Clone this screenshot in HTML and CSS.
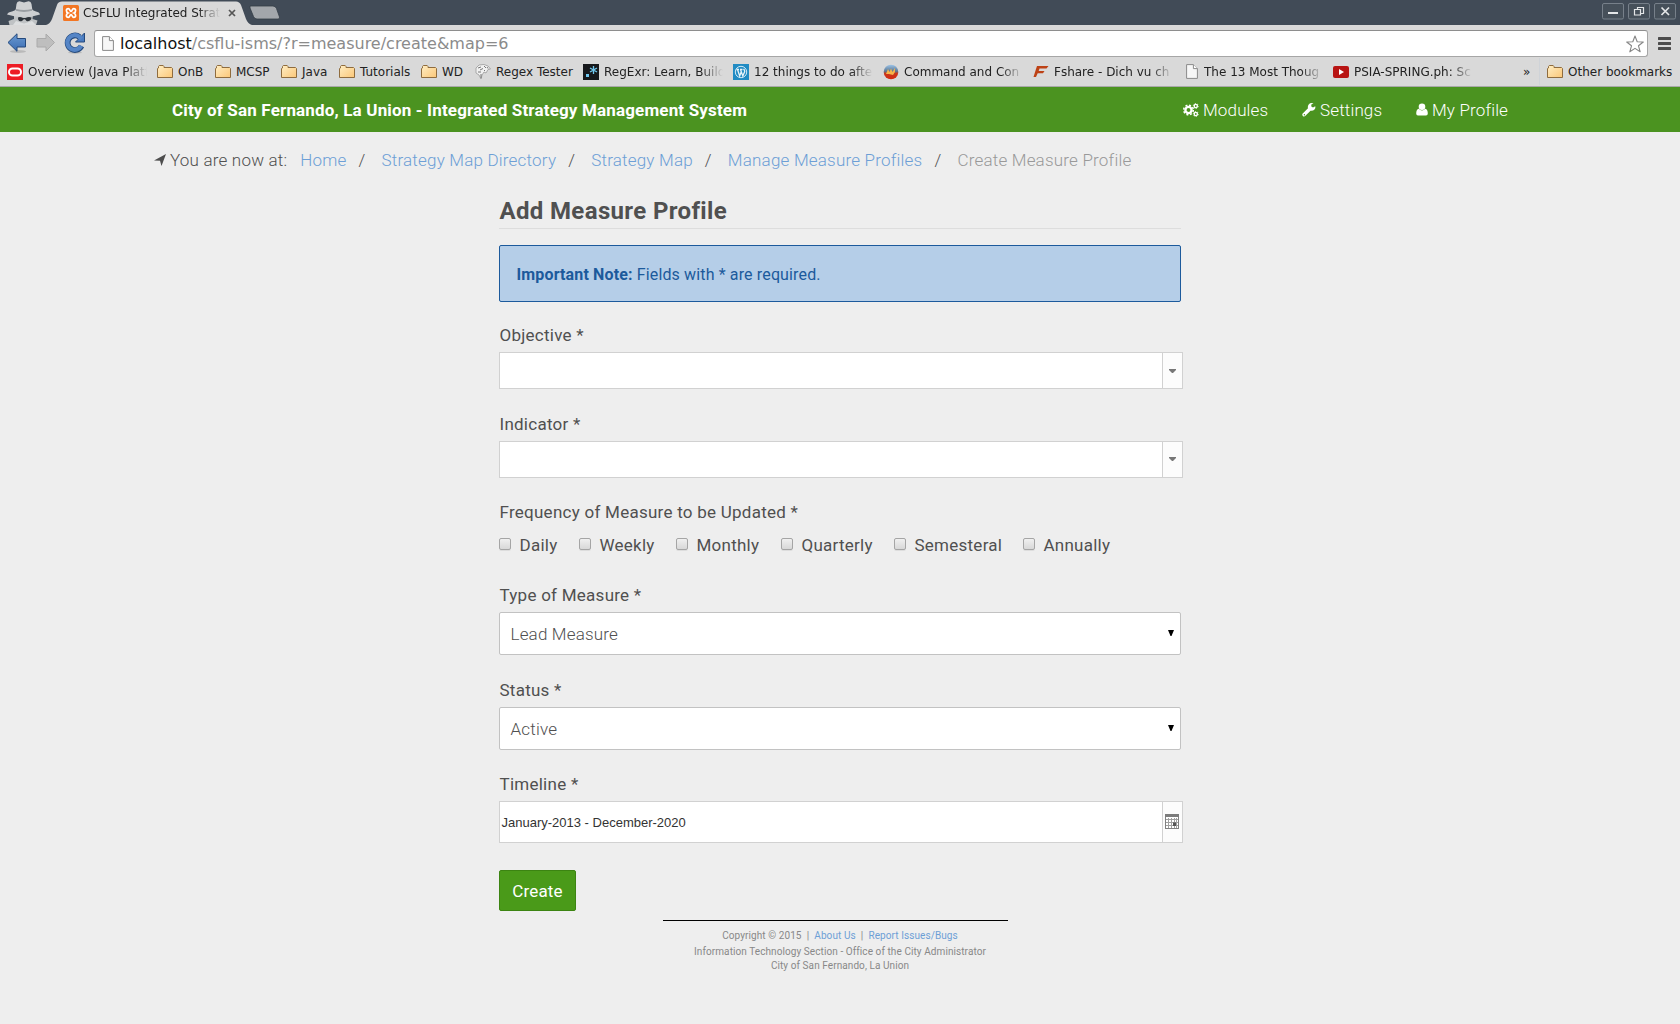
FILE: index.html
```html
<!DOCTYPE html>
<html lang="en">
<head>
<meta charset="utf-8">
<title>CSFLU Integrated Strategy Management System</title>
<link rel="stylesheet" href="styles.css">
</head>
<body>
<svg class="defs" width="0" height="0">
  <defs>
    <linearGradient id="gFolder" x1="0" y1="0" x2="1" y2="1"><stop offset="0" stop-color="#ffeec4"/><stop offset="1" stop-color="#fbc778"/></linearGradient>
    <linearGradient id="gBlue" x1="0" y1="0" x2="0" y2="1"><stop offset="0" stop-color="#6b9ad2"/><stop offset="1" stop-color="#3a6cb2"/></linearGradient>
    <linearGradient id="gBall" x1="0" y1="0" x2="0" y2="1"><stop offset="0" stop-color="#9cc4e8"/><stop offset=".45" stop-color="#5b7794"/><stop offset=".6" stop-color="#c8381c"/><stop offset="1" stop-color="#d52a10"/></linearGradient>
    <symbol id="folder" viewBox="0 0 16 14"><path d="M.5 12.5V3.5L1.5 3V1.5L2.3.5H6.2L7 1.5V2.5H14.5L15.5 3.5V12.5Z" fill="url(#gFolder)" stroke="#8f6c3e"/></symbol>
    <symbol id="file" viewBox="0 0 12 15"><path d="M.6.6H7.4L11.4 4.6V14.4H.6Z" fill="#f7f7f7" stroke="#8a8a8a"/><path d="M7.4.6V4.6H11.4" fill="#fff" stroke="#8a8a8a"/></symbol>
  </defs>
</svg>

<div class="tabstrip">
  <svg class="incognito" width="34" height="24" viewBox="0 0 34 24">
    <path d="M7 13H26L25.500 18 30.500 19.500 29 24H2.500L1.500 20 7 18Z" fill="#bfc2c4"/>
    <path d="M8.500 10 9.500 3Q10 .2 12.500 .3L17 1.500 21.500 .3Q24 .2 24.500 3L25.500 10Z" fill="#cfd1d3"/>
    <path d="M0 13.500Q1 11 5 10.500Q8 9.500 9 8.500Q17 11 25 8.500Q26 9.500 29 10.500Q32.500 11 33 13.500Q25 16 17 16Q8 16 0 13.500Z" fill="#cdcfd1"/>
    <path d="M8.800 9.800Q17 12 25.200 9.800L24.800 8Q17 10 9.200 8Z" fill="#9a9ea2"/>
    <path d="M11 16.500Q13 15.500 16 17H18.500Q21.500 15.500 24.500 16.500L24 18.500Q22 21 19.500 20L18 18.300H16.800L15 20Q12.500 21 11.200 18.800Z" fill="#2d3339"/>
    <path d="M6 24 9 20 17 22.500 25 20 29 24Z" fill="#dcdedf"/>
  </svg>
  <div class="tab">
    <svg class="tabshape" width="206" height="25" viewBox="0 0 206 25"><path d="M0 25Q4 24 6 19L11 5Q12 1.500 16 1.500H190Q193.500 1.500 195 5L200 19Q202 24 206 25Z" fill="#d9d9d9"/></svg>
    <svg class="favicon" width="16" height="16" viewBox="0 0 16 16"><rect width="16" height="16" rx="1.500" fill="#f37623"/><path d="M5.300 3.600C2.700 3.600 2.900 7.200 5 8C2.900 8.800 2.700 12.400 5.300 12.400C7 12.400 6.700 9.700 8 9.700S9 12.400 10.700 12.400C13.300 12.400 13.100 8.800 11 8C13.100 7.200 13.300 3.600 10.700 3.600C9 3.600 9.300 6.300 8 6.300S7 3.600 5.300 3.600Z" fill="none" stroke="#fff" stroke-width="1.700"/></svg>
    <span class="tabtitle fade">CSFLU Integrated Strat</span>
    <svg class="tabclose" width="8" height="8" viewBox="0 0 8 8"><path d="M1 1 7 7M7 1 1 7" stroke="#555" stroke-width="1.700"/></svg>
  </div>
  <svg class="newtab" width="32" height="15" viewBox="0 0 32 15"><path d="M1 1H24Q26.500 1 27.500 3.500L30.500 12Q31 14 29 14H8Q5.500 14 4.500 11.500L1 3Z" fill="#a3a7ab" stroke="#343c45" stroke-width=".8"/></svg>
  <div class="winbtns">
    <svg width="22" height="17" viewBox="0 0 22 17"><rect x=".5" y=".5" width="21" height="15.500" rx="1.500" fill="#46505a" stroke="#77808a"/><path d="M6 10H16" stroke="#e4e6e8" stroke-width="2"/></svg>
    <svg width="22" height="17" viewBox="0 0 22 17"><rect x=".5" y=".5" width="21" height="15.500" rx="1.500" fill="#46505a" stroke="#77808a"/><path d="M9.500 6.500V4.500H15.500V10.500H12.500M6.500 6.500H12.500V12H6.500Z" fill="none" stroke="#e4e6e8" stroke-width="1.200"/></svg>
    <svg width="22" height="17" viewBox="0 0 22 17"><rect x=".5" y=".5" width="21" height="15.500" rx="1.500" fill="#46505a" stroke="#77808a"/><path d="M7.500 4.500 15 12M15 4.500 7.500 12" stroke="#e4e6e8" stroke-width="1.700"/></svg>
  </div>
</div>

<div class="toolbar">
  <svg class="back" width="20" height="20" viewBox="0 0 20 20"><ellipse cx="11" cy="18.500" rx="8" ry="1.500" fill="#b9b9b9"/><path d="M1 9.500 10 .8V5.500H18.500V14H10V18.300Z" fill="url(#gBlue)" stroke="#24497c" stroke-width="1"/></svg>
  <svg class="fwd" width="20" height="20" viewBox="0 0 20 20"><path d="M18.500 9.500 10 1V5.500H1V14H10V18Z" fill="#bebebe" stroke="#aaa"/></svg>
  <svg class="reload" width="22" height="22" viewBox="0 0 22 22"><ellipse cx="11" cy="20.500" rx="7" ry="1.200" fill="#b9b9b9"/><path d="M17.500 14A7.300 7.300 0 1 1 15.500 5" fill="none" stroke="#24497c" stroke-width="5.800"/><path d="M20.500 1V10H11.500Z" fill="#4a7cc0" stroke="#24497c"/><path d="M17.200 13.800A7.300 7.300 0 1 1 15.500 5L17.500 7" fill="none" stroke="#5585c6" stroke-width="4.200"/></svg>
  <div class="omnibox">
    <svg width="12" height="15"><use href="#file"/></svg>
    <span class="url">localhost<span class="path">/csflu-isms/?r=measure/create&amp;map=6</span></span>
    <svg class="star" width="18" height="18" viewBox="0 0 18 18"><path d="M9 1 11.200 6.800 17.300 7 12.500 10.800 14.200 16.800 9 13.400 3.800 16.800 5.500 10.800 .7 7 6.800 6.800Z" fill="#fff" stroke="#858585" stroke-width="1.100" stroke-linejoin="round"/></svg>
  </div>
  <svg class="menu" width="13" height="13" viewBox="0 0 13 13"><path d="M1 1.500H12M1 6.500H12M1 11.500H12" stroke="#4c4c4c" stroke-width="3" stroke-linecap="round"/></svg>
</div>

<div class="bookmarks">
  <div class="bm w150"><svg class="ic" width="16" height="16" viewBox="0 0 16 16"><rect width="16" height="16" fill="#ed1c24"/><rect x="2" y="4.500" width="12" height="7" rx="3.500" fill="none" stroke="#fff" stroke-width="2"/></svg><span class="fade">Overview (Java Platf</span></div>
  <div class="bm w58"><svg class="ic" width="16" height="14"><use href="#folder"/></svg><span>OnB</span></div>
  <div class="bm w66"><svg class="ic" width="16" height="14"><use href="#folder"/></svg><span>MCSP</span></div>
  <div class="bm w58"><svg class="ic" width="16" height="14"><use href="#folder"/></svg><span>Java</span></div>
  <div class="bm w82"><svg class="ic" width="16" height="14"><use href="#folder"/></svg><span>Tutorials</span></div>
  <div class="bm w54"><svg class="ic" width="16" height="14"><use href="#folder"/></svg><span>WD</span></div>
  <div class="bm w108"><svg class="ic" width="16" height="16" viewBox="0 0 16 16"><path d="M1 4 4 1 9 .5 13 2 15.500 5 13 5.500 11 9 9 8 7 11 6 15 4 11 1 9Z" fill="#f1f1f1" stroke="#999" stroke-width=".8"/><path d="M3 4 6 3M5 6 8 4.500M3 8 6 8M9 2 11 4M12 3 13 4.500M6 10 6 14M9 6 10 7" stroke="#777" stroke-width="1"/></svg><span>Regex Tester</span></div>
  <div class="bm w150"><svg class="ic" width="16" height="16" viewBox="0 0 16 16"><rect width="16" height="16" fill="#17191c"/><rect x="3" y="10" width="3" height="3" fill="#70c9f0"/><path d="M10.500 2V10M7 4 14 8M14 4 7 8" stroke="#70c9f0" stroke-width="1.300"/></svg><span class="fade">RegExr: Learn, Build</span></div>
  <div class="bm w150"><svg class="ic" width="16" height="16" viewBox="0 0 16 16"><rect width="16" height="16" fill="#218bc3"/><circle cx="8" cy="8" r="5.700" fill="none" stroke="#e8f4fa" stroke-width=".9"/><path d="M3.500 5.500H6M7 5.500H9.500M4.500 5.500 6.700 12 8.300 7.500M7.500 5.500 9.800 12 11.700 7.500Q11.700 6 10.500 5" fill="none" stroke="#e8f4fa" stroke-width="1.300"/></svg><span class="fade">12 things to do afte</span></div>
  <div class="bm w150"><svg class="ic" width="16" height="16" viewBox="0 0 16 16"><circle cx="8" cy="8" r="7.300" fill="url(#gBall)"/><path d="M3 10 5 5 6.500 8 8 4.500 9.500 8 12 4 12 8 10 11 6 10Z" fill="#f6b54a"/></svg><span class="fade">Command and Con</span></div>
  <div class="bm w150"><svg class="ic" width="16" height="16" viewBox="0 0 16 16"><path d="M4 2H15.500L13.500 4.500H6.500L5.700 7H11.500L10 9.200H4.700L3 13H.5L3 5Z" fill="#bd4216"/></svg><span class="fade">Fshare - Dich vu ch</span></div>
  <div class="bm w150"><svg class="ic file" width="12" height="15"><use href="#file"/></svg><span class="fade">The 13 Most Thoug</span></div>
  <div class="bm w150"><svg class="ic" width="16" height="16" viewBox="0 0 16 16"><rect y="2" width="16" height="12" rx="2" fill="#b81413"/><path d="M6 5V11L11 8Z" fill="#fff"/></svg><span class="fade">PSIA-SPRING.ph: Sc</span></div>
  <span class="more">»</span>
  <div class="bm other"><svg class="ic" width="16" height="14"><use href="#folder"/></svg><span>Other bookmarks</span></div>
</div>

<header class="topbar">
  <h1 class="brand">City of San Fernando, La Union - Integrated Strategy Management System</h1>
  <nav class="nav">
    <a class="n1"><svg width="16" height="14" viewBox="0 0 16 14"><circle cx="5.500" cy="7" r="3.100" fill="none" stroke="#fff" stroke-width="2.400"/><circle cx="5.500" cy="7" r="4.800" fill="none" stroke="#fff" stroke-width="1.500" stroke-dasharray="2 1.770"/><circle cx="12.800" cy="3" r="1.600" fill="none" stroke="#fff" stroke-width="1.400"/><circle cx="12.800" cy="3" r="2.500" fill="none" stroke="#fff" stroke-width=".8" stroke-dasharray="1.300 1.300"/><circle cx="12.800" cy="11" r="1.600" fill="none" stroke="#fff" stroke-width="1.400"/><circle cx="12.800" cy="11" r="2.500" fill="none" stroke="#fff" stroke-width=".8" stroke-dasharray="1.300 1.300"/></svg><span>Modules</span></a>
    <a class="n2"><svg width="14" height="14" viewBox="0 0 14 14"><path d="M13.200 3.200 11 4.600 9.300 3.600V1.600L11.500.4Q8.500-.6 6.700 1.500Q5.400 3.200 6 5.300L.7 10.600Q-.2 11.800.8 12.900Q2 14 3.200 13L8.500 7.700Q10.800 8.200 12.500 6.500Q13.800 5 13.200 3.200ZM2.400 12.400A.7.7 0 1 1 2.400 11A.7.7 0 1 1 2.400 12.400Z" fill="#fff"/></svg><span>Settings</span></a>
    <a class="n3"><svg width="12" height="13" viewBox="0 0 12 13"><circle cx="6" cy="3.700" r="3.300" fill="#fff"/><path d="M2.700 5.800Q6 9 9.300 5.800Q11.800 6.500 11.800 10.500Q11.800 12.500 10 12.500H2Q.2 12.500.2 10.500Q.2 6.500 2.700 5.800Z" fill="#fff"/></svg><span>My Profile</span></a>
  </nav>
</header>

<div class="crumbs">
  <svg width="12" height="12" viewBox="0 0 12 12"><path d="M12 0 7.500 12 6 6.700 0 6.500Z" fill="#4d4d4d"/></svg>
  <span class="here">You are now at:</span>
  <a>Home</a><i>/</i><a>Strategy Map Directory</a><i>/</i><a>Strategy Map</a><i>/</i><a>Manage Measure Profiles</a><i>/</i><span class="current">Create Measure Profile</span>
</div>

<main class="form">
  <h2>Add Measure Profile</h2>
  <div class="alert"><b>Important Note:</b> Fields with * are required.</div>

  <label class="lbl">Objective *</label>
  <div class="combo"><span class="val"></span><span class="trigger"><svg width="7" height="4" viewBox="0 0 7 4"><path d="M0 0H7V1L4 4H3L0 1Z" fill="#777"/></svg></span></div>

  <label class="lbl">Indicator *</label>
  <div class="combo"><span class="val"></span><span class="trigger raised"><svg width="7" height="4" viewBox="0 0 7 4"><path d="M0 0H7V1L4 4H3L0 1Z" fill="#777"/></svg></span></div>

  <label class="lbl freq">Frequency of Measure to be Updated *</label>
  <div class="checks">
    <label class="c1"><span class="box"></span>Daily</label>
    <label class="c2"><span class="box"></span>Weekly</label>
    <label class="c3"><span class="box"></span>Monthly</label>
    <label class="c4"><span class="box"></span>Quarterly</label>
    <label class="c5"><span class="box"></span>Semesteral</label>
    <label class="c6"><span class="box"></span>Annually</label>
  </div>

  <label class="lbl type">Type of Measure *</label>
  <div class="select"><span>Lead Measure</span><svg width="6" height="6" viewBox="0 0 6 6"><path d="M0 0H6L3.500 6H2.500Z"/></svg></div>

  <label class="lbl">Status *</label>
  <div class="select"><span>Active</span><svg width="6" height="6" viewBox="0 0 6 6"><path d="M0 0H6L3.500 6H2.500Z"/></svg></div>

  <label class="lbl time">Timeline *</label>
  <div class="combo date"><span class="val">January-2013 - December-2020</span><span class="trigger raised"><svg width="14" height="15" viewBox="0 0 14 15"><rect x=".5" y=".5" width="13" height="14" fill="#fff" stroke="#808080"/><path d="M0 0H14V3H0Z" fill="#7c7c7c"/><path d="M1 5.500H13M1 8.500H13M1 11.500H13M3.500 4V14M6.500 4V14M9.500 4V14M11.500 4V14" stroke="#a0a0a0" stroke-width="1"/><rect x="8" y="8.500" width="3" height="3.500" fill="#555"/></svg></span></div>

  <button class="create">Create</button>
</main>

<footer class="foot">
  <hr>
  <p class="f1">Copyright © 2015 &nbsp;|&nbsp; <a>About Us</a> &nbsp;|&nbsp; <a>Report Issues/Bugs</a></p>
  <p class="f2">Information Technology Section - Office of the City Administrator</p>
  <p class="f3">City of San Fernando, La Union</p>
</footer>
</body>
</html>
```
FILE: styles.css
```css
* { box-sizing: border-box; }
body { margin: 0; width: 1680px; height: 1024px; overflow: hidden; background: #eee; font-family: Roboto, sans-serif; color: #505050; }
svg { display: block; flex: none; }
.defs { position: absolute; }
.fade { white-space: nowrap; overflow: hidden; -webkit-mask-image: linear-gradient(to right, #000 calc(100% - 22px), transparent); mask-image: linear-gradient(to right, #000 calc(100% - 22px), transparent); }

/* browser window */
.tabstrip { display: flex; height: 25px; background: #414b57; font: 12px "DejaVu Sans", sans-serif; color: #222; }
.incognito { margin: 1px 0 0 7px; }
.tab { position: relative; display: flex; align-items: center; width: 206px; height: 25px; margin-left: 5px; padding-left: 17px; }
.tabshape { position: absolute; left: 0; top: 0; }
.favicon { position: relative; }
.tabtitle { position: relative; width: 137px; margin-left: 4px; line-height: 18px; }
.tabclose { position: relative; margin-left: 8px; }
.newtab { margin: 5px 0 0 -3px; }
.winbtns { display: flex; gap: 4px; margin: 3px 4px 0 auto; }

.toolbar { display: flex; height: 32px; background: #d9d9d9; }
.back { margin: 8px 0 0 7px; }
.fwd { margin: 8px 0 0 9px; }
.reload { margin: 7px 0 0 8px; }
.omnibox { display: flex; align-items: center; width: 1554px; height: 27px; margin: 5px 0 0 8px; padding: 0 3px 0 7px; background: #fff; border: 1px solid #a6a6a6; border-top-color: #8e8e8e; border-radius: 3px; font: 16px "DejaVu Sans", sans-serif; color: #111; }
.url { margin-left: 6px; }
.path { color: #8b8b8b; }
.star { margin-left: auto; }
.menu { margin: 12px 0 0 10px; }

.bookmarks { display: flex; align-items: center; height: 30px; padding-left: 7px; background: #d9d9d9; border-bottom: 1px solid #a9a9a9; font: 12px "DejaVu Sans", sans-serif; color: #222; white-space: nowrap; }
.bm { display: flex; align-items: center; height: 27px; flex: none; }
.bm .ic { margin-right: 5px; }
.bm .file { margin: 0 6px 0 3px; }
.bm .fade { width: 119px; }
.w150 { width: 150px; } .w58 { width: 58px; } .w66 { width: 66px; } .w82 { width: 82px; } .w54 { width: 54px; } .w108 { width: 108px; }
.more { width: 16px; margin: 0 0 0 40px; }
.other { padding-left: 7px; border-left: 1px solid #cfd3d8; }

/* page header */
.topbar { display: flex; align-items: center; height: 45px; padding-left: 172px; background: #4b9320; color: #fff; }
.brand { width: 1011px; margin: 0; font-size: 17px; line-height: 20px; font-weight: 700; letter-spacing: .163px; }
.nav { display: flex; font-size: 17px; font-weight: 300; line-height: 20px; letter-spacing: .15px; }
.nav a { display: flex; align-items: center; gap: 4px; }
.n1 { width: 119px; }
.n2 { width: 114px; }

.crumbs { display: flex; align-items: center; height: 20px; margin-top: 18px; padding-left: 154px; font-size: 17px; font-weight: 300; line-height: 20px; letter-spacing: .2px; white-space: nowrap; }
.here { margin: 0 13px 0 4px; }
.crumbs a { color: #6d9fd6; }
.crumbs i { width: 35px; padding-left: 12px; font-style: normal; }
.current { color: #999; }

.form { width: 682px; margin: 26px 0 0 499px; }
h2 { height: 33px; margin: 0 0 16px; padding: 1px 0 0 .5px; font-size: 24px; line-height: 28px; letter-spacing: .35px; border-bottom: 1px solid #ddd; }
.alert { display: flex; align-items: center; height: 57px; padding: 2px 0 0 16.5px; white-space: pre; background: #b5cee8; border: 1px solid #1c5a9c; border-radius: 2px; color: #1c5a9c; font-size: 16px; letter-spacing: .14px; }
.lbl { display: block; height: 20px; margin: 25px 0 7px; padding-left: .5px; font-size: 17px; line-height: 20px; letter-spacing: .255px; }
.alert + .lbl { margin-top: 23px; }
.combo { display: flex; width: 684px; height: 37px; background: #fff; border: 1px solid #d1d1d1; }
.val { flex: 1; align-self: center; padding-left: 1.5px; font: 13px "Liberation Sans", sans-serif; color: #333; }
.trigger { display: flex; align-items: center; justify-content: center; width: 20px; padding-right: 1px; border-left: 1px solid #d1d1d1; background: #fcfcfc; }
.raised { padding-bottom: 2px; }
.lbl.freq { margin: 24px 0 13px; }
.checks { display: flex; height: 20px; font-size: 17px; line-height: 20px; letter-spacing: .25px; }
.checks label { display: flex; align-items: center; gap: 8.5px; }
.box { width: 12px; height: 12px; margin-bottom: 2px; border: 1px solid #a5a5a5; border-radius: 2px; background: linear-gradient(#f0f0f0, #d8d8d8); box-shadow: 0 1px 0 #ddd; }
.c1 { width: 80px; } .c2 { width: 97px; } .c3 { width: 105px; } .c4 { width: 113px; } .c5 { width: 129px; }
.lbl.type { margin-top: 30px; }
.lbl.time { margin-top: 24px; }
.select { display: flex; align-items: center; justify-content: space-between; height: 43px; padding: 0 6px 0 10.5px; background: #fff; border: 1px solid #c2c2c2; border-radius: 2px; font-size: 17px; font-weight: 300; letter-spacing: .18px; }
.select svg { margin-bottom: 1px; }
.combo.date { height: 42px; }
.create { display: block; width: 77px; height: 41px; margin: 27px 0 0; padding: 0; background: #4a9a19; border: 1px solid #3c8412; border-radius: 2px; color: #fff; font: 17px Roboto, sans-serif; letter-spacing: .15px; }

.foot { margin-top: 9px; text-align: center; font-size: 10px; letter-spacing: .08px; color: #888; white-space: nowrap; }
.foot hr { width: 345px; height: 1px; margin: 0 0 7px 663px; border: 0; background: #000; }
.foot p { margin: 0; line-height: 16px; }
.foot a { color: #6d9fd6; }
.foot .f3 { line-height: 12px; }
```
